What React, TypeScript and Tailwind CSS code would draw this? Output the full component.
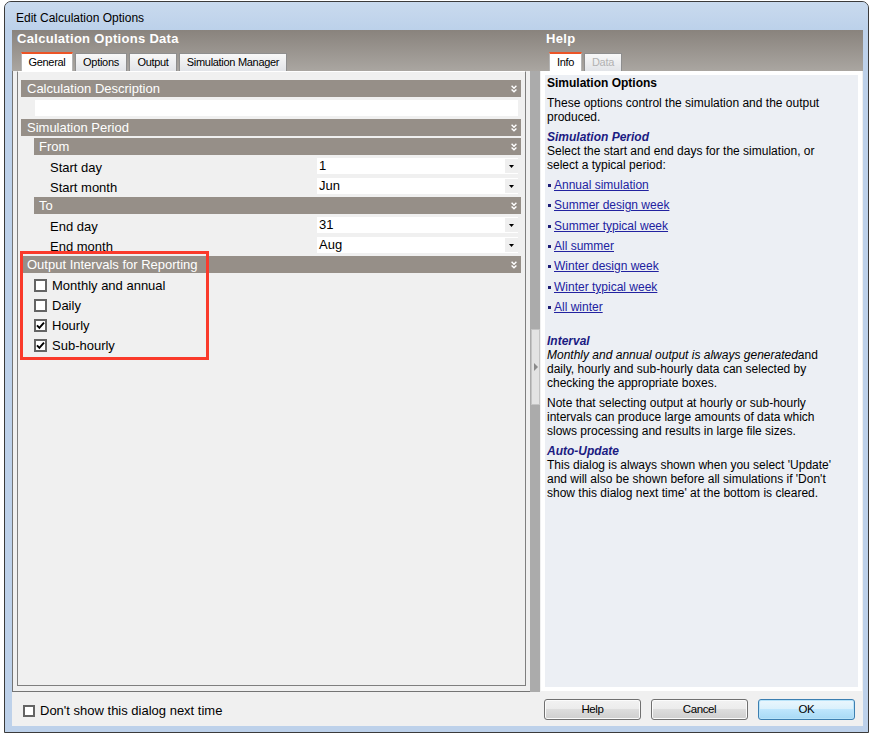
import React from "react";

function Chev() {
  return (
    <svg width="6" height="8" viewBox="0 0 6 8" className="shrink-0">
      <path d="M0.6 0.8L3 3.2L5.4 0.8M0.6 4.4L3 6.8L5.4 4.4" stroke="#ffffff" strokeWidth="1.4" fill="none" />
    </svg>
  );
}

function SectionHeader({ title, sub }: { title: string; sub?: boolean }) {
  return (
    <div
      className={
        sub
          ? "ml-[13px] h-[17px] bg-[#968f88] flex items-center justify-between pl-[5px] pr-[4px]"
          : "h-[17px] bg-[#968f88] flex items-center justify-between pl-[6px] pr-[4px]"
      }
    >
      <span className="text-white text-[13px] leading-[17px] whitespace-nowrap">{title}</span>
      <Chev />
    </div>
  );
}

function Drop({ value, first }: { value: string; first?: boolean }) {
  return (
    <div className={first ? "mt-[3px] w-[201px] h-[16px] bg-white flex items-center" : "mt-[2px] w-[201px] h-[16px] bg-white flex items-center"}>
      <span className="flex-1 pl-[2px] text-[13px] leading-[16px]">{value}</span>
      <span className="w-[13px] h-[14px] bg-[#efefef] flex items-center justify-center">
        <svg width="5" height="3" viewBox="0 0 5 3">
          <path d="M0 0H5L2.5 3Z" fill="#000" />
        </svg>
      </span>
    </div>
  );
}

function PropRow({ label, value, first }: { label: string; value: string; first?: boolean }) {
  return (
    <div className="h-[21px] flex items-start">
      <span
        className={
          first
            ? "w-[296px] pl-[29px] pt-[5px] text-[13px] leading-[16px] whitespace-nowrap"
            : "w-[296px] pl-[29px] pt-[4px] text-[13px] leading-[16px] whitespace-nowrap"
        }
      >
        {label}
      </span>
      <Drop value={value} first={first} />
    </div>
  );
}

function Check({ checked, small }: { checked?: boolean; small?: boolean }) {
  return (
    <span
      className={
        small
          ? "w-[12px] h-[12px] shrink-0 border-2 border-[#646464] bg-white flex items-center justify-center"
          : "w-[13px] h-[13px] shrink-0 border-2 border-[#646464] bg-white flex items-center justify-center"
      }
    >
      {checked && (
        <svg width="9" height="9" viewBox="0 0 9 9">
          <path d="M1 4.3L3.4 6.8L8 1.6" stroke="#000" strokeWidth="1.9" fill="none" />
        </svg>
      )}
    </span>
  );
}

function CheckRow({ label, checked }: { label: string; checked?: boolean }) {
  return (
    <div className="h-[13px] flex items-center ml-[13px]">
      <Check checked={checked} />
      <span className="ml-[5px] text-[13px] leading-[13px] whitespace-nowrap">{label}</span>
    </div>
  );
}

const tabBase = "flex items-center justify-center text-[11px] tracking-[-0.3px] leading-[13px] whitespace-nowrap";
const tabActive = "h-[19px] bg-white border-x border-[#b5b5b5] border-t-2 border-t-[#ec5426]";
const tabIdle = "h-[18px] bg-linear-to-b from-[#f8f8f8] to-[#e2e4e8] border-x border-t border-[#8e8e8e]";

function Btn({ label, primary }: { label: string; primary?: boolean }) {
  return (
    <div
      className={
        primary
          ? "w-[97px] h-[21px] rounded-[3px] border border-[#3c7fb1] bg-[linear-gradient(#eaf6fd,#d9f0fc_50%,#bee6fd_50%,#a7d9f5)] shadow-[inset_0_0_0_1px_#b8e3f9] flex items-center justify-center text-[11.5px] tracking-[-0.4px]"
          : "w-[97px] h-[21px] rounded-[3px] border border-[#707070] bg-[linear-gradient(#f2f2f2,#ebebeb_50%,#dddddd_50%,#cfcfcf)] shadow-[inset_0_0_0_1px_#fbfbfb] flex items-center justify-center text-[11.5px] tracking-[-0.4px]"
      }
    >
      {label}
    </div>
  );
}

const links: { t: string; m: string }[] = [
  { t: "Annual simulation", m: "mt-[6px]" },
  { t: "Summer design week", m: "mt-[6px]" },
  { t: "Summer typical week", m: "mt-[7px]" },
  { t: "All summer", m: "mt-[6px]" },
  { t: "Winter design week", m: "mt-[6px]" },
  { t: "Winter typical week", m: "mt-[7px]" },
  { t: "All winter", m: "mt-[6px]" },
];

export default function App() {
  return (
    <div className="relative w-[874px] h-[738px] bg-white pl-[4px] pt-[1px] font-['Liberation_Sans',Arial,sans-serif] text-black overflow-hidden">
      <div className="w-[865px] h-[732px] border border-[#3b3b3b] rounded-t-[7px] flex flex-col bg-[#bdd1ea] overflow-hidden">
        {/* title bar */}
        <div className="h-[28px] shrink-0 bg-linear-to-b from-[#c9daee] to-[#bcd1ea] pl-[11px] pt-[9px] text-[12px] leading-[14px] text-black">
          Edit Calculation Options
        </div>
        {/* body */}
        <div className="flex-1 pl-[7px] pr-[5px] pb-[6px] flex">
          <div className="w-[851px] h-[696px] bg-[#f0f0f0] flex flex-col">
            {/* header band */}
            <div className="h-[41px] shrink-0 flex bg-linear-to-b from-[#89837d] to-[#aaa6a1]">
              <div className="w-[528px] flex flex-col">
                <div className="ml-[5px] mt-[1px] h-[16px] text-white font-bold text-[13px] leading-[16px] tracking-[0.3px] whitespace-nowrap">
                  Calculation Options Data
                </div>
                <div className="mt-[5px] ml-[9px] h-[19px] flex items-end gap-[2px]">
                  <div className={`${tabBase} ${tabActive} w-[52px]`}>General</div>
                  <div className={`${tabBase} ${tabIdle} w-[52px]`}>Options</div>
                  <div className={`${tabBase} ${tabIdle} w-[48px]`}>Output</div>
                  <div className={`${tabBase} ${tabIdle} w-[108px]`}>Simulation Manager</div>
                </div>
              </div>
              <div className="flex-1 flex flex-col">
                <div className="ml-[6px] mt-[1px] h-[16px] text-white font-bold text-[13px] leading-[16px] tracking-[0.3px]">
                  Help
                </div>
                <div className="mt-[5px] ml-[9px] h-[19px] flex items-end gap-[2px]">
                  <div className={`${tabBase} ${tabActive} w-[33px]`}>Info</div>
                  <div className={`${tabBase} ${tabIdle} w-[38px] text-[#b2b2b2]`}>Data</div>
                </div>
              </div>
            </div>

            {/* main row */}
            <div className="h-[621px] shrink-0 flex">
              {/* left pane */}
              <div className="w-[518px] h-[621px] border-l border-b border-[#747474]">
                <div className="ml-[4px] w-[509px] h-[615px] border border-[#7f7f7f] border-t-white bg-[#f0f0f0] pt-[8px] pl-[3px] pr-[4px]">
                  <SectionHeader title="Calculation Description" />
                  <div className="mt-[3px] ml-[14px] mr-[3px] h-[16px] bg-white" />
                  <div className="mt-[3px]">
                    <SectionHeader title="Simulation Period" />
                  </div>
                  <div className="mt-[2px]">
                    <SectionHeader title="From" sub />
                  </div>
                  <PropRow label="Start day" value="1" first />
                  <PropRow label="Start month" value="Jun" />
                  <SectionHeader title="To" sub />
                  <PropRow label="End day" value="31" first />
                  <PropRow label="End month" value="Aug" />
                  <SectionHeader title="Output Intervals for Reporting" />
                  <div className="pt-[6px] flex flex-col gap-[7px]">
                    <CheckRow label="Monthly and annual" />
                    <CheckRow label="Daily" />
                    <CheckRow label="Hourly" checked />
                    <CheckRow label="Sub-hourly" checked />
                  </div>
                </div>
              </div>

              {/* splitter */}
              <div className="relative w-[10px] h-[621px] bg-[#ababab]">
                <div className="absolute left-[1px] top-[258px] w-[9px] h-[76px] bg-[#e3e3e3] border border-[#c4c4c4] flex items-center justify-center">
                  <svg width="4" height="8" viewBox="0 0 4 8">
                    <path d="M0 0L4 4L0 8Z" fill="#8a8a8a" />
                  </svg>
                </div>
              </div>

              {/* right pane */}
              <div className="w-[323px] pl-[1px]">
                <div className="w-[321px] h-[620px] border-4 border-white bg-[#eceff4]">
                  <div className="pl-[2px] pt-[1px] text-[12px] leading-[14px] text-black whitespace-nowrap">
                    <div className="font-bold">Simulation Options</div>
                    <div className="mt-[6px]">
                      These options control the simulation and the output
                      <br />
                      produced.
                    </div>
                    <div className="mt-[6px] font-bold italic text-[#1b1b82]">Simulation Period</div>
                    <div>
                      Select the start and end days for the simulation, or
                      <br />
                      select a typical period:
                    </div>
                    {links.map((l) => (
                      <div key={l.t} className={`${l.m} flex items-start h-[14px]`}>
                        <span className="mt-[6px] ml-[1px] mr-[3px] w-[3px] h-[3px] bg-[#1f1f78]" />
                        <span className="underline text-[#2222a0]">{l.t}</span>
                      </div>
                    ))}
                    <div className="mt-[20px] font-bold italic text-[#1b1b82]">Interval</div>
                    <div>
                      <i>Monthly and annual output is always generated</i>and
                      <br />
                      daily, hourly and sub-hourly data can selected by
                      <br />
                      checking the appropriate boxes.
                    </div>
                    <div className="mt-[6px]">
                      Note that selecting output at hourly or sub-hourly
                      <br />
                      intervals can produce large amounts of data which
                      <br />
                      slows processing and results in large file sizes.
                    </div>
                    <div className="mt-[6px] font-bold italic text-[#1b1b82]">Auto-Update</div>
                    <div>
                      This dialog is always shown when you select 'Update'
                      <br />
                      and will also be shown before all simulations if 'Don't
                      <br />
                      show this dialog next time' at the bottom is cleared.
                    </div>
                  </div>
                </div>
              </div>
            </div>

            {/* bottom bar */}
            <div className="h-[34px] shrink-0 flex items-start">
              <div className="ml-[11px] mt-[12px] flex items-center">
                <Check small />
                <span className="ml-[5px] text-[13px] leading-[13px] whitespace-nowrap">Don't show this dialog next time</span>
              </div>
              <div className="ml-auto mr-[8px] mt-[7px] flex gap-[10px]">
                <Btn label="Help" />
                <Btn label="Cancel" />
                <Btn label="OK" primary />
              </div>
            </div>
          </div>
        </div>
      </div>

      {/* red highlight */}
      <div className="absolute left-[20px] top-[251px] w-[189px] h-[109px] border-[3px] border-[#fa3a2b]" />
    </div>
  );
}
